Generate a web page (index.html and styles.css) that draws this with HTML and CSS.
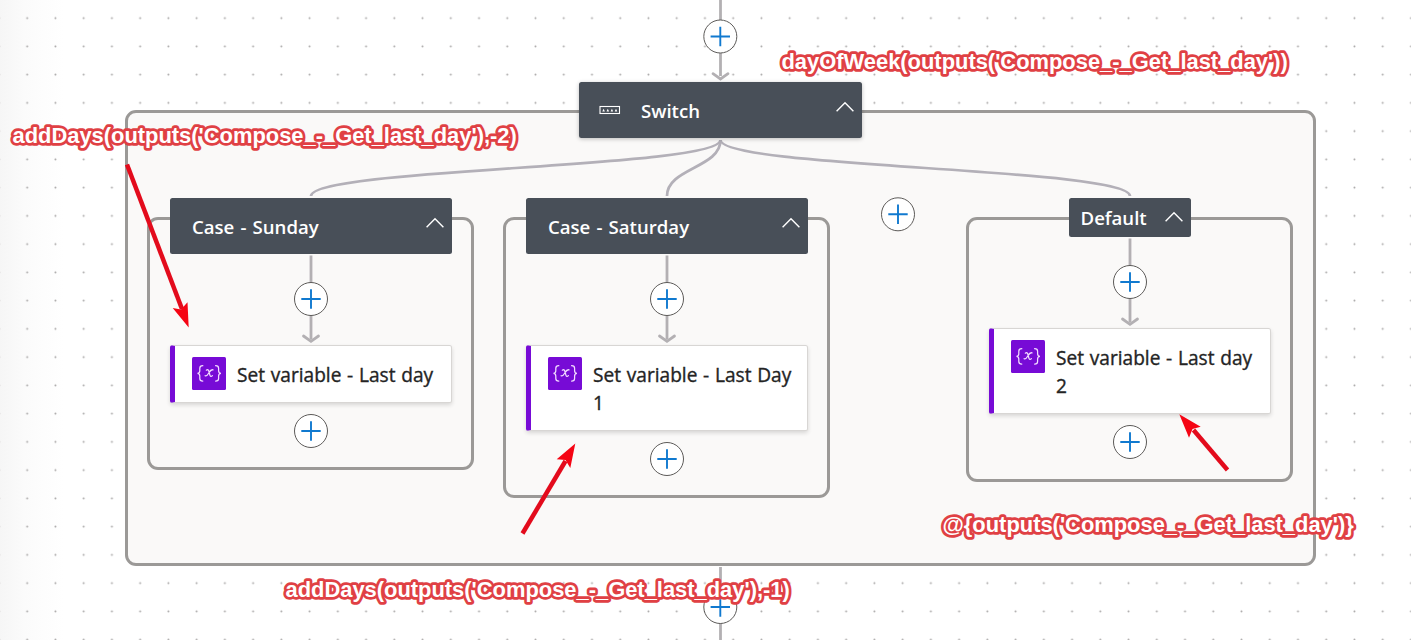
FILE: index.html
```
<!DOCTYPE html>
<html lang="en">
<head>
<meta charset="utf-8">
<title>Flow designer</title>
<link rel="stylesheet" href="styles.css">
</head>
<body>
<svg class="defs" width="0" height="0" aria-hidden="true">
  <symbol id="add" viewBox="0 0 36 36">
    <circle cx="18" cy="18" r="16.500" fill="#fff" stroke="#5c5a58" stroke-width="1"/>
    <path d="M18 8.300v19.400M8.300 18h19.400" stroke="#1079cf" stroke-width="1.900"/>
  </symbol>
  <symbol id="link" viewBox="0 0 36 91">
    <path d="M18 1.500v84" stroke="#b3b0b3" stroke-width="2.800"/>
    <path d="M10.500 82l7.500 5.300 7.500-5.300" fill="none" stroke="#b3b0b3" stroke-width="2.800" stroke-linecap="round"/>
    <circle cx="18" cy="45" r="16.500" fill="#fff" stroke="#5c5a58" stroke-width="1"/>
    <path d="M18 35.300v19.400M8.300 45h19.400" stroke="#1079cf" stroke-width="1.900"/>
  </symbol>
  <symbol id="chevron" viewBox="0 0 20 12">
    <path d="M1.600 10.200L10 1.700l8.400 8.500" fill="none" stroke="#fff" stroke-width="1.400"/>
  </symbol>
  <symbol id="variable" viewBox="0 0 34 33">
    <rect width="34" height="33" rx="1.500" fill="#770bd6"/>
    <g fill="none" stroke="#f3dcff" stroke-width="1.250" stroke-linecap="round">
      <path d="M10.800 8.700c-2.500 0-3 .8-3 2.600v2.400c0 1.600-.6 2.500-2.300 2.700 1.700.2 2.300 1.100 2.300 2.700v2.400c0 1.800.5 2.600 3 2.600"/>
      <path d="M23.600 8.700c2.500 0 3 .8 3 2.600v2.400c0 1.600.6 2.500 2.300 2.700-1.700.2-2.300 1.100-2.300 2.700v2.400c0 1.800-.5 2.600-3 2.600"/>
      <path d="M14.300 13.200c1.300-1 2.300-.4 2.700 1.300l.8 3.300c.4 1.700 1.400 2 2.600.8M21 12.900c-1.600-.7-2.900 1-4 2.900s-2.200 3.700-3.900 2.900"/>
    </g>
  </symbol>
</svg>

<main class="canvas">
  <svg class="grid" width="1411" height="640">
    <defs>
      <pattern id="dots" x="13.100" y="4" width="28.240" height="28.250" patternUnits="userSpaceOnUse">
        <circle cx="14.100" cy="14.200" r="1" fill="#a9a7a7"/>
      </pattern>
    </defs>
    <rect width="1411" height="640" fill="url(#dots)"/>
    <path d="M720.500 0v76" stroke="#b3b0b3" stroke-width="2.800"/>
    <path d="M713 73.700l7.500 5.300 7.500-5.300" fill="none" stroke="#b3b0b3" stroke-width="2.800" stroke-linecap="round"/>
    <path d="M720.500 567v73" stroke="#b3b0b3" stroke-width="2.800"/>
    <use href="#add" x="702.300" y="18.500" width="36" height="36"/>
    <use href="#add" x="702.300" y="589" width="36" height="36"/>
  </svg>

  <section class="scope">
    <svg class="edges" width="1191" height="456" viewBox="125 110 1191 456">
      <g fill="none" stroke="#b3b0b8" stroke-width="2.700">
        <path d="M720.500 140C720.500 168 311 168 311 196"/>
        <path d="M720.500 140C720.500 168 667 168 667 196"/>
        <path d="M720.500 140C720.500 168 1130 168 1130 196"/>
      </g>
      <use href="#add" x="880" y="196.300" width="36" height="36"/>
    </svg>
    <header class="node node-switch">
      <svg class="switch-icon" width="22" height="10" viewBox="0 0 22 10">
        <rect x="1" y="1.500" width="19.500" height="7" fill="none" stroke="#fff" stroke-width="1.100"/>
        <path d="M3.300 6.500L4.600 3.700 5.900 6.500zM7.500 6.500L8.800 3.700 10.100 6.500zM11.600 6.500L12.900 3.700 14.200 6.500zM15.700 6.500L17 3.700 18.300 6.500z" fill="#fff"/>
      </svg>
      <span class="name name-switch">Switch</span>
      <svg class="chevron" width="20" height="12"><use href="#chevron"/></svg>
    </header>
  </section>

  <section class="branch sunday">
    <header class="node"><span class="name">Case - Sunday</span><svg class="chevron" width="20" height="12"><use href="#chevron"/></svg></header>
    <svg class="link" width="36" height="91"><use href="#link"/></svg>
    <article class="card"><svg class="icon" width="34" height="33"><use href="#variable"/></svg><span class="title">Set variable - Last day</span></article>
    <svg class="add" width="36" height="36"><use href="#add"/></svg>
  </section>

  <section class="branch saturday">
    <header class="node"><span class="name">Case - Saturday</span><svg class="chevron" width="20" height="12"><use href="#chevron"/></svg></header>
    <svg class="link" width="36" height="91"><use href="#link"/></svg>
    <article class="card tall"><svg class="icon" width="34" height="33"><use href="#variable"/></svg><span class="title">Set variable - Last Day<br>1</span></article>
    <svg class="add" width="36" height="36"><use href="#add"/></svg>
  </section>

  <section class="branch default">
    <header class="node node-small"><span class="name">Default</span><svg class="chevron" width="20" height="12"><use href="#chevron"/></svg></header>
    <svg class="link" width="36" height="91"><use href="#link"/></svg>
    <article class="card tall"><svg class="icon" width="34" height="33"><use href="#variable"/></svg><span class="title">Set variable - Last day<br>2</span></article>
    <svg class="add" width="36" height="36"><use href="#add"/></svg>
  </section>

  <svg class="notes" width="1411" height="640">
    <g class="arrows">
      <path class="shaft" d="M127 164.500L182 309"/>
      <path class="head" d="M188.700 327.500L172.700 308 181 309.500 187.500 302.300z"/>
      <path class="shaft" d="M522.500 533.500L565.500 461"/>
      <path class="head" d="M575.300 443.500L556.700 459.300 565.500 460 570.300 468z"/>
      <path class="shaft" d="M1227.500 470L1193.500 430"/>
      <path class="head" d="M1179.300 414.300L1200.700 426.700 1192.500 429 1189 437.700z"/>
    </g>
    <g class="note">
      <text x="781.500" y="69.300">dayOfWeek(outputs('Compose_-_Get_last_day'))</text>
      <text x="12.500" y="143">addDays(outputs('Compose_-_Get_last_day'),-2)</text>
      <text x="285.500" y="597.300">addDays(outputs('Compose_-_Get_last_day'),-1)</text>
      <text x="942.500" y="532">@{outputs('Compose_-_Get_last_day')}</text>
    </g>
  </svg>
</main>
</body>
</html>
```
FILE: styles.css
```
* { box-sizing: border-box; }
body { margin: 0; font-family: "Open Sans", "Noto Sans", sans-serif; }
.defs { position: absolute; }
.canvas {
  position: relative;
  width: 1411px;
  height: 640px;
  overflow: hidden;
  background: linear-gradient(90deg, #f6f6f6 0, #fbfbfb 24px, #fff 64px);
}
.grid, .notes { position: absolute; inset: 0; }

/* Group frames placed on the free canvas */
.scope, .branch {
  position: absolute;
  display: flex;
  flex-direction: column;
  align-items: center;
  border: 3px solid #9b9997;
  border-radius: 11px;
  background: #faf9f8;
}
.scope { left: 125px; top: 110px; width: 1191px; height: 456px; }
.branch { top: 217px; width: 327px; }
.sunday { left: 147px; height: 253px; }
.saturday { left: 503px; height: 281px; }
.default { left: 966px; height: 264.500px; }
.edges { position: absolute; left: -3px; top: -3px; overflow: visible; }

.node {
  display: flex;
  flex: none;
  align-items: center;
  width: 282px;
  height: 56.500px;
  margin-top: -22.400px;
  margin-left: 1px;
  padding: 0 7px 0 22px;
  border-radius: 2.500px;
  background: #484f58;
  color: #fff;
}
.node-switch {
  position: relative;
  width: 283px;
  margin-top: -31.500px;
  margin-left: 0;
  padding-left: 20px;
  box-shadow: 0 1px 4px rgba(0, 0, 0, .25);
}
.node-small { width: 122px; height: 39.500px; margin-left: 0; padding: 0 7px 0 12px; }
.name { font-size: 18.600px; font-weight: 600; line-height: 28px; word-spacing: 1.300px; white-space: nowrap; padding-top: 2px; }
.name-switch { padding-left: 20px; }
.chevron { flex: none; margin-left: auto; margin-bottom: 6px; }
.node-small .chevron { margin-bottom: 0; }

.link, .add { flex: none; display: block; }
.add { margin-top: 10px; }

.card {
  display: flex;
  flex: none;
  align-items: flex-start;
  width: 282px;
  height: 58px;
  margin-left: 1px;
  padding: 11px 0 0 17px;
  border: 1px solid #d8d6d4;
  border-left: 5px solid #770bd6;
  border-radius: 2.500px;
  background: #fff;
  color: #242424;
  box-shadow: 0 2px 4px rgba(0, 0, 0, .14);
}
.card.tall { height: 86px; }
.icon { flex: none; margin-right: 11px; }
.title {
  padding-top: 4px;
  font-size: 19.100px;
  font-weight: 400;
  line-height: 28px;
  word-spacing: .8px;
  white-space: nowrap;
  -webkit-text-stroke: .35px #242424;
}

.shaft { stroke: #e30b1c; stroke-width: 4.500px; }
.head { fill: #f50514; }
.note {
  font: bold 21.900px "Liberation Sans", Arial, sans-serif;
  fill: #fff;
  stroke: #e04044;
  stroke-width: 5.500px;
  stroke-linejoin: round;
  paint-order: stroke;
}
```
